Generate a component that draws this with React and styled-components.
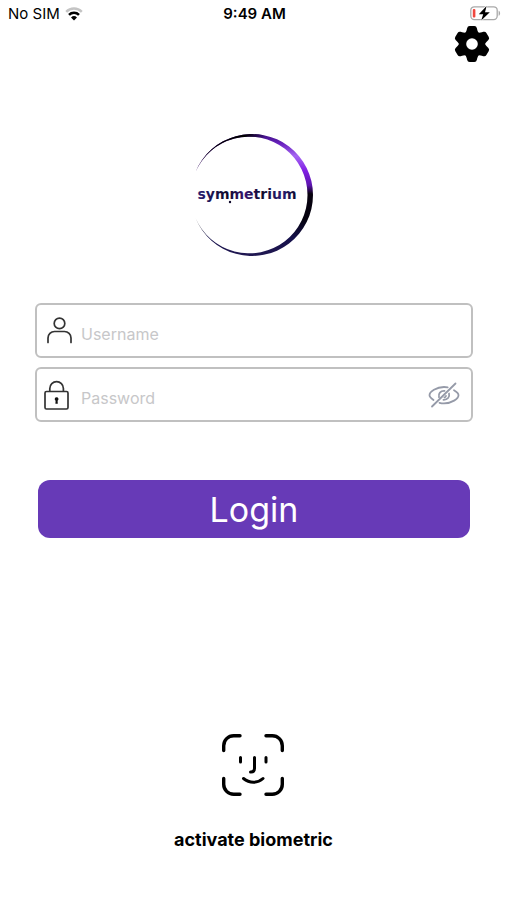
import React, { useState } from 'react';

import styled, { createGlobalStyle } from 'styled-components';

const purple = '#673ab7';

const GlobalStyle = createGlobalStyle`
  * {
    box-sizing: border-box;
  }

  body {
    margin: 0;
    background: #fff;
    color: #000;
    font-family: Inter, 'Liberation Sans', sans-serif;
  }

  svg {
    display: block;
    flex: none;
  }
`;

const Screen = styled.div`
  display: flex;
  flex-direction: column;
  min-height: 100vh;
`;

const StatusBar = styled.header`
  display: grid;
  grid-template-columns: 1fr auto 1fr;
  align-items: center;
  height: 26px;
  padding: 2px 6px 0 8px;
  font-size: 15px;
  line-height: 20px;
`;

const Carrier = styled.div`
  display: flex;
  align-items: center;
  gap: 5px;
`;

const Clock = styled.time`
  font-weight: 600;
`;

const BatterySlot = styled.div`
  display: flex;
  justify-content: flex-end;
`;

const TopBar = styled.div`
  display: flex;
  justify-content: flex-end;
  padding-right: 17px;
`;

const IconButton = styled.button`
  display: flex;
  padding: 0;
  border: 0;
  background: none;
  color: ${props => props.$color || '#000'};
  cursor: pointer;
`;

const LogoWrap = styled.div`
  display: flex;
  justify-content: center;
  padding: 71px 0 46px;
`;

const Form = styled.form`
  display: flex;
  flex-direction: column;
  gap: 9px;
  padding: 0 34px 0 35px;
`;

const Field = styled.label`
  display: flex;
  align-items: center;
  gap: 7px;
  height: 55px;
  padding: 0 11px 0 7px;
  border: 2px solid #c0c0c0;
  border-radius: 6px;
`;

const Input = styled.input`
  flex: 1;
  min-width: 0;
  padding: 6px 0 0;
  border: 0;
  outline: 0;
  background: none;
  color: #000;
  font-family: inherit;
  font-size: 16px;
  line-height: 24px;

  &::placeholder {
    color: #c7c7c9;
    opacity: 1;
  }
`;

const LoginButton = styled.button`
  height: 58px;
  margin: 49px 3px 0;
  padding: 2px 0 0;
  border: 0;
  border-radius: 12px;
  background: ${purple};
  color: #fff;
  font-family: inherit;
  font-size: 34px;
  line-height: 56px;
  cursor: pointer;
`;

const Biometric = styled.button`
  display: flex;
  flex-direction: column;
  align-items: center;
  align-self: center;
  gap: 32px;
  margin: auto 0 48px;
  padding: 0;
  border: 0;
  background: none;
  color: #000;
  font-family: inherit;
  font-size: 18px;
  font-weight: 700;
  line-height: 24px;
  cursor: pointer;
`;

const WifiIcon = () => (
  <svg width="18" height="14" viewBox="0 0 18 14" fill="none" strokeWidth="2.5">
    <path d="M1.2 4.8a11 11 0 0 1 15.6 0" stroke="#c4c4c4" />
    <path d="M4 7.8a7 7 0 0 1 10 0" stroke="#000" />
    <path d="M9 13.4L6 10.4a4.3 4.3 0 0 1 6 0z" fill="#000" />
  </svg>
);

const BatteryIcon = () => (
  <svg width="31" height="16" viewBox="0 0 31 16">
    <rect x="0.8" y="0.8" width="26.4" height="12.8" rx="3.5" fill="#fff" stroke="#a9a9a9" strokeWidth="1.3" />
    <path d="M28.6 4.8c2 .6 2 4.4 0 5z" fill="#a9a9a9" />
    <rect x="2.8" y="3" width="2.6" height="8.4" rx="1" fill="#f0473f" />
    <path d="M16.6 0L8.8 8.2h4.4L11.2 14.6 19.8 6.200h-4.800z" fill="#000" stroke="#fff" strokeWidth="1.4" paintOrder="stroke" />
  </svg>
);

const GearIcon = () => (
  <svg width="36" height="36" viewBox="-18 -18 36 36">
    <mask id="gear-hole">
      <rect x="-18" y="-18" width="36" height="36" fill="#fff" />
      <circle r="5.8" fill="#000" />
    </mask>
    <g mask="url(#gear-hole)" fill="currentColor">
      <circle r="13.2" />
      {[0, 60, 120, 180, 240, 300].map(angle => (
        <path
          key={angle}
          transform={`rotate(${angle})`}
          d="M-7-10C-5.8-12.5-5.2-14-4.9-15.8Q-4.4-18-2.4-18H2.4Q4.4-18 4.9-15.8C5.2-14 5.8-12.5 7-10z"
        />
      ))}
    </g>
  </svg>
);

const ring = 'M5.5 38A61 61 0 1 1 5.5 84A58.36 58.36 0 1 0 5.5 38z';

// the ring is open on the left, so the viewBox is wider on the right to balance it
const Logo = () => (
  <svg width="129" height="124" viewBox="-1 -1 129 124" role="img" aria-label="symmetrium">
    <defs>
      <linearGradient id="ring-side" gradientUnits="userSpaceOnUse" x1="0" y1="0" x2="0" y2="122">
        <stop offset="0" stopColor="#3c0f80" />
        <stop offset="0.08" stopColor="#6a22c0" />
        <stop offset="0.18" stopColor="#a566f2" />
        <stop offset="0.3" stopColor="#8120e4" />
        <stop offset="0.42" stopColor="#5c14ae" />
        <stop offset="0.49" stopColor="#08020f" />
        <stop offset="0.7" stopColor="#05030f" />
        <stop offset="0.85" stopColor="#15104a" />
        <stop offset="1" stopColor="#211852" />
      </linearGradient>
      <linearGradient id="ring-top" gradientUnits="userSpaceOnUse" x1="0" y1="0" x2="122" y2="0">
        <stop offset="0" stopColor="#000" />
        <stop offset="0.45" stopColor="#000" />
        <stop offset="0.62" stopColor="#000" stopOpacity="0" />
      </linearGradient>
      <linearGradient id="wordmark" x1="0" y1="0" x2="1" y2="0">
        <stop offset="0" stopColor="#2c1c74" />
        <stop offset="0.3" stopColor="#100a2c" />
        <stop offset="0.48" stopColor="#3a1470" />
        <stop offset="0.65" stopColor="#100a2c" />
        <stop offset="0.85" stopColor="#2c1c74" />
        <stop offset="1" stopColor="#100a2c" />
      </linearGradient>
      <clipPath id="upper-half">
        <rect width="124" height="61" />
      </clipPath>
    </defs>
    <path d={ring} fill="url(#ring-side)" />
    <path d={ring} fill="url(#ring-top)" clipPath="url(#upper-half)" />
    <text
      x="57"
      y="65"
      textAnchor="middle"
      fontFamily="'DejaVu Sans', sans-serif"
      fontSize="14"
      fontWeight="700"
      fill="url(#wordmark)"
    >
      symmetrium
    </text>
    <circle cx="40" cy="68" r="1.2" fill="#100a2c" />
  </svg>
);

const UserIcon = () => (
  <svg width="30" height="30" viewBox="0 0 30 30" fill="none" stroke="#333" strokeWidth="1.7">
    <circle cx="15.5" cy="7.4" r="5.3" />
    <path d="M4 26.500v-4.500a6.500 6.500 0 0 1 6.500-6.500h10a6.500 6.500 0 0 1 6.500 6.500v4.500" strokeLinecap="round" />
  </svg>
);

const LockIcon = () => (
  <svg width="30" height="30" viewBox="0 0 30 30" fill="none" stroke="#333" strokeWidth="1.7">
    <rect x="1" y="11.5" width="23" height="17.5" rx="1.5" />
    <path d="M5.8 11.5V8.4a6.8 6.8 0 0 1 13.6 0v3.1" />
    <path d="M12.6 17.2a1.9 1.9 0 0 1 1 3.5l.2 3h-2.4l.2-3a1.9 1.9 0 0 1 1-3.5z" fill="#111" stroke="none" />
  </svg>
);

const EyeOffIcon = () => (
  <svg width="32" height="26" viewBox="0 0 32 26" fill="none" stroke="currentColor" strokeWidth="1.8" strokeLinecap="round">
    <path d="M4 24.5L27.500 1.500" />
    <path d="M5.500 18C3.300 16.400 1.500 14.600 1.500 13.200 1.500 9.700 8.500 5 16 5c1.300 0 2.500.1 3.700.4" />
    <path d="M26 8.200c2.800 1.600 4.500 3.500 4.500 5 0 3.500-7 8.200-14.500 8.200-1.600 0-3.100-.2-4.500-.6" />
    <path d="M11 15.200c-1-3.500 1.500-6.500 5.500-6.300" />
    <path d="M21 11.500c1 3.500-1.500 6.500-5.500 6.300" />
    <path d="M18 13.900a2.200 2.200 0 0 1-1.600 1.600" />
  </svg>
);

const FaceIcon = () => (
  <svg width="62" height="62" viewBox="0 0 62 62" fill="none" stroke="currentColor" strokeWidth="3.4" strokeLinecap="round">
    <path d="M1.7 16.5v-4.800a10 10 0 0 1 10-10H18" />
    <path d="M44 1.7h6.300a10 10 0 0 1 10 10v4.800" />
    <path d="M60.3 44.5v5.800a10 10 0 0 1-10 10H44" />
    <path d="M18 60.3h-6.300a10 10 0 0 1-10-10v-5.800" />
    <path d="M18.5 23.5v4.500M44 23.5v4.500" strokeWidth="3" />
    <path d="M32.5 23.5V34.500q0 3.500-3.500 3.500h-.5" strokeWidth="3" />
    <path d="M21.5 44.5c6 5 14 5 19.5 0" strokeWidth="3" />
  </svg>
);

const App = () => {
  const [visible, setVisible] = useState(false);

  return (
    <Screen>
      <GlobalStyle />
      <StatusBar>
        <Carrier>
          No SIM
          <WifiIcon />
        </Carrier>
        <Clock>9:49 AM</Clock>
        <BatterySlot>
          <BatteryIcon />
        </BatterySlot>
      </StatusBar>
      <TopBar>
        <IconButton type="button" aria-label="Settings">
          <GearIcon />
        </IconButton>
      </TopBar>
      <LogoWrap>
        <Logo />
      </LogoWrap>
      <Form onSubmit={e => e.preventDefault()}>
        <Field htmlFor="username">
          <UserIcon />
          <Input id="username" name="username" aria-label="Username" placeholder="Username" autoComplete="username" />
        </Field>
        <Field htmlFor="password">
          <LockIcon />
          <Input
            id="password"
            name="password"
            type={visible ? 'text' : 'password'}
            aria-label="Password"
            placeholder="Password"
            autoComplete="current-password"
          />
          <IconButton
            type="button"
            $color="#959aa8"
            aria-label="Show password"
            onClick={() => setVisible(!visible)}
          >
            <EyeOffIcon />
          </IconButton>
        </Field>
        <LoginButton type="submit">Login</LoginButton>
      </Form>
      <Biometric type="button">
        <FaceIcon />
        activate biometric
      </Biometric>
    </Screen>
  );
};

export default App;
